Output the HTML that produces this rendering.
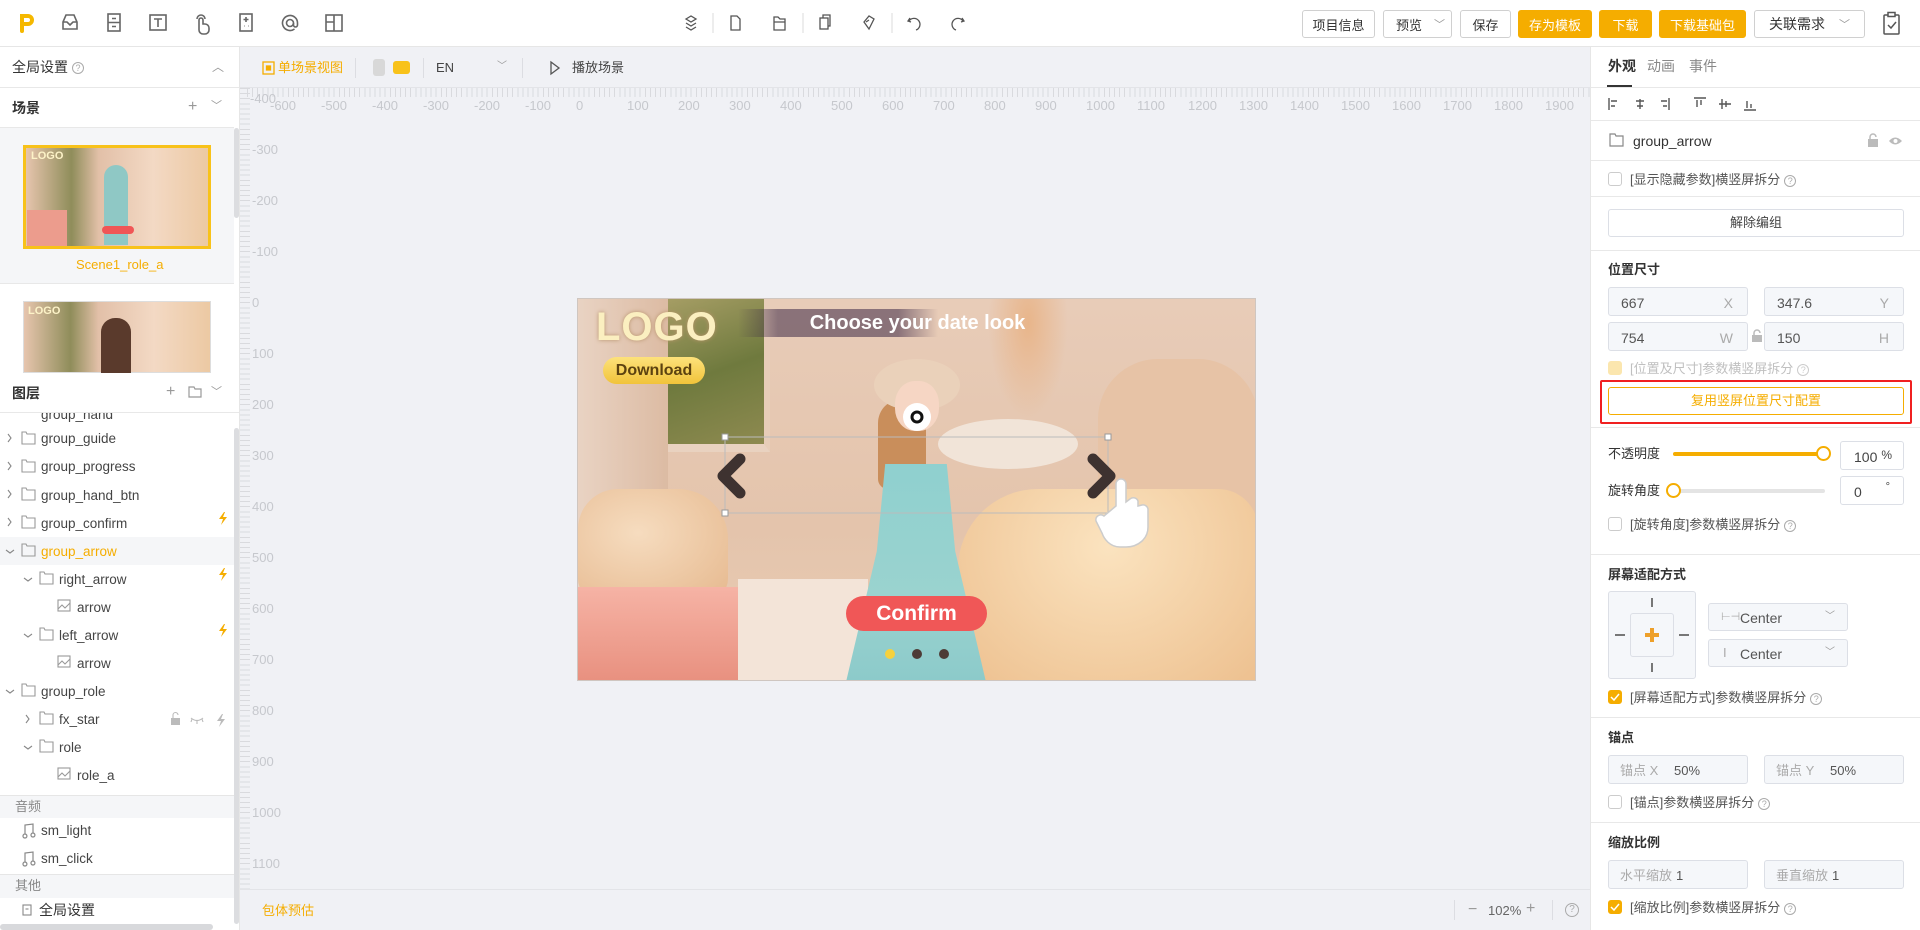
<!DOCTYPE html>
<html><head><meta charset="utf-8">
<style>
*{box-sizing:border-box;margin:0;padding:0}
body{width:1920px;height:930px;overflow:hidden;background:#fff;font-family:"Liberation Sans","Noto Sans CJK SC",sans-serif;color:#333;font-size:14px;position:relative}
.a{position:absolute}
.t{position:absolute;white-space:nowrap;line-height:1}
svg{position:absolute;overflow:visible}
.btn{position:absolute;top:10px;height:28px;border:1px solid #d0d0d0;border-radius:3px;font-size:13px;display:flex;align-items:center;justify-content:center;color:#333;background:#fff}
.ob{background:#f5ad00;border-color:#f5ad00;color:#fff}
.hl{position:absolute;height:1px;background:#e8e8e8}
.row{position:absolute;left:0;width:235px;height:28px}
.row .t{top:7px;font-size:13.5px;color:#444}
.inp{position:absolute;height:29px;border:1px solid #dcdfe6;border-radius:3px;background:#f5f7fa;font-size:14px;color:#555}
.cb{position:absolute;width:14px;height:14px;border:1px solid #ccc;border-radius:3px;background:#fff}
.cbo{background:#f5ad00;border-color:#f5ad00}
.lbl{font-size:13px;color:#555}
.rl{position:absolute;font-size:13px;color:#c6c8cd;white-space:nowrap;line-height:1}
.q{display:inline-block;width:12px;height:12px;border:1px solid #aaa;border-radius:50%;font-size:9px;line-height:10px;text-align:center;color:#aaa;vertical-align:middle;margin-left:4px}
.z{z-index:5}
</style></head><body>

<!-- TOP BAR -->
<div class="a" style="left:0;top:0;width:1920px;height:47px;border-bottom:1px solid #e6e6e6;background:#fff"></div>
<svg width="1920" height="47" style="left:0;top:0" fill="none" stroke="#666" stroke-width="1.6">
<path d="M22 31V16h6a4 4 0 010 8h-6" stroke="#f5b800" stroke-width="4" stroke-linecap="round"/>
<path d="M63 22l3-7h8l3 7v7H63z M63 22h4l3 3 3-3h4"/>
<rect x="108" y="14" width="12" height="17"/><path d="M108 22.5h12M112 18.5h4M112 26.5h4"/>
<rect x="150" y="15" width="16" height="15"/><path d="M154 19h8M158 19v8"/>
<path d="M199 28v-8a2 2 0 014 0v4h2a4 4 0 014 4v2a4 4 0 01-4 4h-2a4 4 0 01-4-4z M197 19a4 4 0 018 0"/>
<rect x="240" y="14" width="12" height="17"/><path d="M246 17v5M243.5 19.5h5M244 26h.5M248 26h.5"/>
<circle cx="290" cy="23" r="3.5"/><path d="M293.5 23v2a2 2 0 004 0v-2a7.5 7.5 0 10-3 6"/>
<rect x="326" y="15" width="16" height="16"/><path d="M334 15v16M326 22h8"/>
<g stroke-width="1.3" stroke="#555">
<path d="M686 19l5-3 5 3-5 3zM686 23l5 3 5-3M686 27l5 3 5-3"/>
<line x1="713" y1="13" x2="713" y2="33" stroke="#e3e3e3"/>
<path d="M731 16h6l3 3v11h-9z"/>
<path d="M774 17h4l2 2h5v11h-11z M774 22h11"/>
<line x1="803" y1="13" x2="803" y2="33" stroke="#e3e3e3"/>
<rect x="820" y="18" width="8" height="11"/><path d="M823 18v-3h7v11h-2"/>
<path d="M864 22l5-6 5 3-5 10z M866 22l3-2"/>
<line x1="892" y1="13" x2="892" y2="33" stroke="#e3e3e3"/>
<path d="M910 18l-2 3 3 1 M909 21a6 6 0 117 9"/>
<path d="M962 18l2 3-3 1 M963 21a6 6 0 10-7 9"/>
</g>
</svg>
<div class="btn" style="left:1302px;width:73px">项目信息</div>
<div class="btn" style="left:1383px;width:69px;justify-content:flex-start;padding-left:12px">预览 <span style="margin-left:12px;color:#999;font-size:11px">﹀</span></div>
<div class="btn" style="left:1460px;width:51px">保存</div>
<div class="btn ob" style="left:1518px;width:74px">存为模板</div>
<div class="btn ob" style="left:1599px;width:53px">下载</div>
<div class="btn ob" style="left:1659px;width:87px">下载基础包</div>
<div class="btn" style="left:1754px;width:111px;font-size:14px">关联需求 <span style="margin-left:14px;color:#999;font-size:11px">﹀</span></div>
<svg width="20" height="26" style="left:1882px;top:11px" fill="none" stroke="#555" stroke-width="1.5"><rect x="2" y="4" width="15" height="19" rx="1"/><rect x="6" y="1.5" width="7" height="4" fill="#fff"/><path d="M6 14l3 3 5-6"/></svg>

<!-- LEFT PANEL -->
<div class="a" style="left:239px;top:47px;width:1px;height:883px;background:#e6e6e6"></div>
<div class="t" style="left:12px;top:60px;font-size:14px;color:#333">全局设置<span class="q">?</span></div>
<div class="t" style="left:212px;top:61px;color:#999;font-size:12px">︿</div>
<div class="hl" style="left:0;top:87px;width:239px"></div>
<div class="t" style="left:12px;top:101px;font-size:14px;font-weight:bold;color:#333">场景</div>
<div class="t" style="left:188px;top:99px;color:#999;font-size:16px">+</div>
<div class="t" style="left:211px;top:101px;color:#999;font-size:11px">﹀</div>
<div class="hl" style="left:0;top:127px;width:234px"></div>
<div class="a" style="left:0;top:128px;width:234px;height:156px;background:#f5f6f8;border-bottom:1px solid #e8e8e8"></div>
<div class="a" style="left:234px;top:128px;width:5px;height:90px;background:#dcdde0;border-radius:3px"></div>
<div class="a" style="left:23px;top:145px;width:188px;height:104px;border:3px solid #f8c21a;background:linear-gradient(90deg,#e7c5ae 0%,#8f8d5a 25%,#e2c0a8 40%,#f3d9c4 70%,#ecc9a3 100%)"></div>
<div class="a" style="left:27px;top:210px;width:40px;height:36px;background:#ec9c8d"></div>
<div class="a" style="left:104px;top:165px;width:24px;height:80px;background:#8fc8c5;border-radius:12px 12px 0 0"></div>
<div class="a" style="left:102px;top:226px;width:32px;height:8px;background:#f05656;border-radius:4px"></div>
<div class="t" style="left:31px;top:151px;font-size:11px;font-weight:bold;color:#fdf3c8">LOGO</div>
<div class="t" style="left:76px;top:258px;font-size:13px;color:#f5ad00">Scene1_role_a</div>
<div class="a" style="left:23px;top:301px;width:188px;height:72px;border:1px solid #ddd;background:linear-gradient(90deg,#e7c5ae 0%,#8f8d5a 25%,#e2c0a8 40%,#f3d9c4 70%,#ecc9a3 100%)"></div>
<div class="a" style="left:101px;top:318px;width:30px;height:55px;background:#5a3a2c;border-radius:14px 14px 0 0"></div>
<div class="t" style="left:28px;top:306px;font-size:11px;font-weight:bold;color:#fdf3c8">LOGO</div>

<div class="row" style="top:413px;height:9px;overflow:hidden"><div class="t" style="left:41px;top:-5px">group_hand</div></div>
<div class="row" style="top:537px;background:#f5f6f8"></div>
<div class="t" style="left:41px;top:432px;font-size:13.5px;color:#444">group_guide</div>
<div class="t" style="left:41px;top:460px;font-size:13.5px;color:#444">group_progress</div>
<div class="t" style="left:41px;top:489px;font-size:13.5px;color:#444">group_hand_btn</div>
<div class="t" style="left:41px;top:517px;font-size:13.5px;color:#444">group_confirm</div>
<div class="t" style="left:41px;top:545px;font-size:13.5px;color:#f5ad00">group_arrow</div>
<div class="t" style="left:59px;top:573px;font-size:13.5px;color:#444">right_arrow</div>
<div class="t" style="left:77px;top:601px;font-size:13.5px;color:#444">arrow</div>
<div class="t" style="left:59px;top:629px;font-size:13.5px;color:#444">left_arrow</div>
<div class="t" style="left:77px;top:657px;font-size:13.5px;color:#444">arrow</div>
<div class="t" style="left:41px;top:685px;font-size:13.5px;color:#444">group_role</div>
<div class="t" style="left:59px;top:713px;font-size:13.5px;color:#444">fx_star</div>
<div class="t" style="left:59px;top:741px;font-size:13.5px;color:#444">role</div>
<div class="t" style="left:77px;top:769px;font-size:13.5px;color:#444">role_a</div>
<svg width="240" height="400" style="left:0;top:400px" fill="none" stroke="#888" stroke-width="1.1">
<path d="M8 6l3 3-3 3"/>
<path d="M8 34l3 4-3 4M8 62l3 4-3 4M8 90l3 4-3 4M8 118l3 4-3 4"/>
<path d="M6 150l4 3 4-3M24 178l4 3 4-3M24 234l4 3 4-3M6 290l4 3 4-3M24 346l4 3 4-3"/>
<path d="M26 315l3 4-3 4"/>
<g stroke="#999"><path d="M22 4h13v7H22z M22 32h4l1 2h8v10H22z M22 60h4l1 2h8v10H22z M22 88h4l1 2h8v10H22z M22 116h4l1 2h8v10H22z M22 144h4l1 2h8v10H22z M40 172h4l1 2h8v10H40z M40 228h4l1 2h8v10H40z M22 284h4l1 2h8v10H22z M40 312h4l1 2h8v10H40z M40 340h4l1 2h8v10H40z"/>
<rect x="58" y="200" width="12" height="11"/><path d="M58 209l4-4 3 3 5-5"/>
<rect x="58" y="256" width="12" height="11"/><path d="M58 265l4-4 3 3 5-5"/>
<rect x="58" y="368" width="12" height="11"/><path d="M58 377l4-4 3 3 5-5"/></g>
<g fill="#f5ad00" stroke="none"><path d="M224 112l-5 7h4l-2 6 6-8h-4l2-5z M224 168l-5 7h4l-2 6 6-8h-4l2-5z M224 224l-5 7h4l-2 6 6-8h-4l2-5z"/></g>
<path d="M222 314l-5 7h4l-2 6 6-8h-4l2-5z" fill="#bbb" stroke="none"/>
<rect x="171" y="318" width="9" height="7" fill="#bbb" stroke="none"/><path d="M173 318v-3a2.5 2.5 0 015 0" stroke="#bbb"/>
<path d="M191 318q6 5 12 0M192 319l-1 3M197 321v3M202 319l1 3" stroke="#bbb"/>
</svg>
<!-- layer header on top -->
<div class="a z" style="left:0;top:373px;width:239px;height:40px;background:#fff;border-bottom:1px solid #e8e8e8"></div>
<div class="t z" style="left:12px;top:386px;font-size:14px;font-weight:bold;color:#333">图层</div>
<div class="t z" style="left:166px;top:384px;color:#999;font-size:16px">+</div>
<svg class="z" width="14" height="12" style="left:188px;top:386px" fill="none" stroke="#999" stroke-width="1.2"><path d="M1 1h5l1 2h6v8H1z"/></svg>
<div class="t z" style="left:211px;top:387px;color:#999;font-size:11px">﹀</div>
<div class="a" style="left:234px;top:428px;width:5px;height:496px;background:#dcdde0;border-radius:3px"></div>

<div class="a" style="left:0;top:795px;width:234px;height:23px;background:#f5f6f8;border-top:1px solid #e6e6e6"></div>
<div class="t lbl" style="left:15px;top:800px;color:#888">音频</div>
<div class="t" style="left:41px;top:824px;font-size:13.5px;color:#444">sm_light</div>
<div class="t" style="left:41px;top:852px;font-size:13.5px;color:#444">sm_click</div>
<svg width="20" height="60" style="left:21px;top:822px" fill="none" stroke="#888" stroke-width="1.2"><path d="M4 12V3l8-1v9M4 12a2 2 0 11-.1 0M12 11a2 2 0 11-.1 0M4 40V31l8-1v9M4 40a2 2 0 11-.1 0M12 39a2 2 0 11-.1 0"/></svg>
<div class="a" style="left:0;top:874px;width:234px;height:24px;background:#f5f6f8;border-top:1px solid #e6e6e6"></div>
<div class="t lbl" style="left:15px;top:879px;color:#888">其他</div>
<svg width="12" height="12" style="left:22px;top:904px" fill="none" stroke="#888" stroke-width="1.1"><rect x="1" y="1" width="8" height="10"/><path d="M3.5 5h3"/></svg>
<div class="t" style="left:39px;top:903px;font-size:14px;color:#333">全局设置</div>
<div class="a" style="left:0;top:924px;width:213px;height:6px;background:#d8d9dc;border-radius:3px"></div>

<!-- CANVAS -->
<div class="a" style="left:240px;top:47px;width:1350px;height:883px;background:#f0f1f5"></div>
<svg width="14" height="14" style="left:262px;top:61px" fill="none" stroke="#f5ad00" stroke-width="1.3"><rect x="1" y="1" width="11" height="12"/><rect x="4.5" y="5" width="4" height="4" fill="#f5ad00"/></svg>
<div class="t" style="left:278px;top:61px;font-size:13px;color:#f5ad00">单场景视图</div>
<div class="a" style="left:355px;top:58px;width:1px;height:20px;background:#dcdde2"></div>
<div class="a" style="left:373px;top:59px;width:12px;height:17px;background:#d8d8d8;border-radius:3px"></div>
<div class="a" style="left:393px;top:61px;width:17px;height:13px;background:#f8c21a;border-radius:3px"></div>
<div class="a" style="left:423px;top:58px;width:1px;height:20px;background:#dcdde2"></div>
<div class="t" style="left:436px;top:61px;font-size:13px;color:#444">EN</div>
<div class="t" style="left:497px;top:62px;font-size:10px;color:#999">﹀</div>
<div class="a" style="left:522px;top:58px;width:1px;height:20px;background:#dcdde2"></div>
<svg width="12" height="14" style="left:549px;top:61px" fill="none" stroke="#555" stroke-width="1.3"><path d="M2 1l8 6-8 6z"/></svg>
<div class="t" style="left:572px;top:61px;font-size:13px;color:#444">播放场景</div>
<!-- rulers -->
<div class="a" style="left:240px;top:87px;width:1350px;height:1px;background:#e3e4e8"></div>
<div class="a" style="left:247px;top:88px;width:1343px;height:9px;background:repeating-linear-gradient(90deg,#d9dade 0 1px,transparent 1px 5.1px)"></div>
<div class="a" style="left:240px;top:88px;width:10px;height:802px;background:repeating-linear-gradient(180deg,#d9dade 0 1px,transparent 1px 5.1px)"></div>
<div class="rl" style="left:250px;top:92px">-400</div>
<div class="rl" style="left:270px;top:99px">-600</div><div class="rl" style="left:321px;top:99px">-500</div><div class="rl" style="left:372px;top:99px">-400</div><div class="rl" style="left:423px;top:99px">-300</div><div class="rl" style="left:474px;top:99px">-200</div><div class="rl" style="left:525px;top:99px">-100</div><div class="rl" style="left:576px;top:99px">0</div><div class="rl" style="left:627px;top:99px">100</div><div class="rl" style="left:678px;top:99px">200</div><div class="rl" style="left:729px;top:99px">300</div><div class="rl" style="left:780px;top:99px">400</div><div class="rl" style="left:831px;top:99px">500</div><div class="rl" style="left:882px;top:99px">600</div><div class="rl" style="left:933px;top:99px">700</div><div class="rl" style="left:984px;top:99px">800</div><div class="rl" style="left:1035px;top:99px">900</div><div class="rl" style="left:1086px;top:99px">1000</div><div class="rl" style="left:1137px;top:99px">1100</div><div class="rl" style="left:1188px;top:99px">1200</div><div class="rl" style="left:1239px;top:99px">1300</div><div class="rl" style="left:1290px;top:99px">1400</div><div class="rl" style="left:1341px;top:99px">1500</div><div class="rl" style="left:1392px;top:99px">1600</div><div class="rl" style="left:1443px;top:99px">1700</div><div class="rl" style="left:1494px;top:99px">1800</div><div class="rl" style="left:1545px;top:99px">1900</div>
<div class="rl" style="left:252px;top:143px">-300</div><div class="rl" style="left:252px;top:194px">-200</div><div class="rl" style="left:252px;top:245px">-100</div><div class="rl" style="left:252px;top:296px">0</div><div class="rl" style="left:252px;top:347px">100</div><div class="rl" style="left:252px;top:398px">200</div><div class="rl" style="left:252px;top:449px">300</div><div class="rl" style="left:252px;top:500px">400</div><div class="rl" style="left:252px;top:551px">500</div><div class="rl" style="left:252px;top:602px">600</div><div class="rl" style="left:252px;top:653px">700</div><div class="rl" style="left:252px;top:704px">800</div><div class="rl" style="left:252px;top:755px">900</div><div class="rl" style="left:252px;top:806px">1000</div><div class="rl" style="left:252px;top:857px">1100</div>

<!-- scene image -->
<div class="a" style="left:577px;top:298px;width:679px;height:383px;overflow:hidden;background:linear-gradient(180deg,#e8ccb8 0%,#e4c4ac 60%,#e9cdb4 100%);border:1px solid #cfc6c0">
 <div class="a" style="left:0;top:0;width:90px;height:383px;background:linear-gradient(90deg,#e9d3c3,#dcbba3)"></div>
 <div class="a" style="left:90px;top:0;width:102px;height:153px;background:linear-gradient(160deg,#a59d64,#6f7a3e 50%,#8e8a50);border-right:6px solid #e7cdb8;border-bottom:8px solid #e9d2c0"></div>
 <div class="a" style="left:360px;top:120px;width:140px;height:50px;background:#f1e4d8;border-radius:50%"></div>
 <div class="a" style="left:410px;top:0;width:80px;height:120px;background:radial-gradient(ellipse at 50% 20%,#e8b58a,transparent 70%)"></div>
 <div class="a" style="left:520px;top:60px;width:160px;height:170px;background:#e7c3a6;border-radius:60px 60px 0 0"></div>
 <div class="a" style="left:0;top:190px;width:150px;height:110px;background:radial-gradient(ellipse at 40% 40%,#f6dcbf,#e6b98f);border-radius:40px 50px 20px 20px"></div>
 <div class="a" style="left:0;top:288px;width:176px;height:95px;background:linear-gradient(180deg,#f6b3a5,#e8907f)"></div>
 <div class="a" style="left:160px;top:280px;width:130px;height:103px;background:#f3e4d8"></div>
 <div class="a" style="left:380px;top:190px;width:300px;height:193px;background:radial-gradient(ellipse at 50% 30%,#fbe3bf,#edc08f);border-radius:80px 40px 0 0"></div>
 <div class="a" style="left:300px;top:100px;width:48px;height:90px;background:#c98e5b;border-radius:24px 24px 10px 10px"></div>
 <div class="a" style="left:296px;top:60px;width:86px;height:52px;background:#ead1ba;border-radius:50%"></div>
 <div class="a" style="left:317px;top:82px;width:44px;height:50px;background:#f6d6c4;border-radius:45%"></div>
 <div class="a" style="left:268px;top:165px;width:140px;height:218px;background:linear-gradient(180deg,#8fd0cf,#9ad3cf 60%,#8ccaca);clip-path:polygon(28% 0,72% 0,78% 40%,100% 100%,0 100%,22% 40%)"></div>
 <div class="a" style="left:160px;top:10px;width:200px;height:28px;background:linear-gradient(90deg,transparent,rgba(60,40,70,.55) 20%,rgba(60,40,70,.55) 80%,transparent)"></div>
 <div class="t" style="left:0;width:679px;text-align:center;top:14px;font-size:20px;font-weight:bold;color:#fff">Choose your date look</div>
 <div class="t" style="left:18px;top:8px;font-size:40px;font-weight:bold;color:#fbefc0;letter-spacing:1px;text-shadow:0 0 4px #b7936a">LOGO</div>
 <div class="a" style="left:25px;top:58px;width:102px;height:27px;background:linear-gradient(#fde27b,#f1c33a);border-radius:14px;font-size:16px;font-weight:bold;color:#5c4210;text-align:center;line-height:27px">Download</div>
 <div class="a" style="left:268px;top:297px;width:141px;height:35px;background:#f05757;border-radius:18px;font-size:21px;font-weight:bold;color:#fff;text-align:center;line-height:35px">Confirm</div>
 <div class="a" style="left:307px;top:350px;width:10px;height:10px;background:#f6d13d;border-radius:50%"></div>
 <div class="a" style="left:334px;top:350px;width:10px;height:10px;background:#4d3b36;border-radius:50%"></div>
 <div class="a" style="left:361px;top:350px;width:10px;height:10px;background:#4d3b36;border-radius:50%"></div>
 <svg width="679" height="383" style="left:0;top:0" fill="none">
  <rect x="147" y="138" width="383" height="76" stroke="#bbb" stroke-width="1"/>
  <rect x="144" y="135" width="6" height="6" fill="#fff" stroke="#999"/><rect x="527" y="135" width="6" height="6" fill="#fff" stroke="#999"/><rect x="144" y="211" width="6" height="6" fill="#fff" stroke="#999"/>
  <path d="M162 160l-17 17 17 17" stroke="#3e3230" stroke-width="11" stroke-linecap="round" stroke-linejoin="round"/>
  <path d="M515 160l17 17-17 17" stroke="#3e3230" stroke-width="11" stroke-linecap="round" stroke-linejoin="round"/>
  <path d="M538 207v-22a5 5 0 0110 0v18l4-3a5 5 0 018 2v5l4-1a5 5 0 016 4v18c0 12-10 20-22 20h-6c-10 0-16-8-18-14l-6-12a5 5 0 018-5z" fill="#fff" stroke="#ccc" stroke-width="1.5"/>
  <circle cx="339" cy="118" r="14" fill="#fff"/><circle cx="339" cy="118" r="5" stroke="#111" stroke-width="3"/>
 </svg>
</div>

<!-- bottom bar -->
<div class="a" style="left:240px;top:889px;width:1350px;height:1px;background:#e3e4e8"></div>
<div class="t" style="left:262px;top:904px;font-size:13px;color:#f5ad00">包体预估</div>
<div class="a" style="left:1454px;top:900px;width:1px;height:20px;background:#dcdde2"></div>
<div class="t" style="left:1468px;top:902px;font-size:16px;color:#999">−</div>
<div class="t" style="left:1488px;top:904px;font-size:13px;color:#666">102%</div>
<div class="t" style="left:1526px;top:901px;font-size:16px;color:#999">+</div>
<div class="a" style="left:1552px;top:900px;width:1px;height:20px;background:#dcdde2"></div>
<div class="a" style="left:1565px;top:903px;width:14px;height:14px;border:1.5px solid #aaa;border-radius:50%;font-size:10px;color:#aaa;text-align:center;line-height:11px">?</div>

<!-- RIGHT PANEL -->
<div class="a" style="left:1590px;top:47px;width:330px;height:883px;background:#fff;border-left:1px solid #e6e6e6"></div>
<div class="t" style="left:1608px;top:59px;font-size:14px;font-weight:bold;color:#333">外观</div>
<div class="t" style="left:1647px;top:59px;font-size:14px;color:#888">动画</div>
<div class="t" style="left:1689px;top:59px;font-size:14px;color:#888">事件</div>
<div class="a" style="left:1607px;top:85px;width:25px;height:2px;background:#333"></div>
<div class="hl" style="left:1591px;top:87px;width:329px"></div>
<svg width="160" height="16" style="left:1608px;top:96px" fill="none" stroke="#555" stroke-width="1.4">
<path d="M1 2v12M3 5h6M3 10h4"/><path d="M32 3v10M28 5h8M29 10h6"/><path d="M61 2v12M53 5h6M55 10h4"/>
<path d="M86 2h12M89 4v7M93 4v5"/><path d="M111 8h12M114 3v10M118 5v6"/><path d="M136 14h12M139 5v7M143 8v4"/>
</svg>
<div class="hl" style="left:1591px;top:120px;width:329px"></div>
<svg width="16" height="14" style="left:1609px;top:133px" fill="none" stroke="#888" stroke-width="1.2"><path d="M1 1h5l1 2h7v10H1z"/></svg>
<div class="t" style="left:1633px;top:134px;font-size:14px;color:#333">group_arrow</div>
<svg width="40" height="14" style="left:1868px;top:134px"><rect x="0" y="5" width="10" height="8" fill="#bbb"/><path d="M2 5V3a3 3 0 016 0" fill="none" stroke="#bbb" stroke-width="1.5"/><path d="M21 7q6-7 13 0q-7 7-13 0z" fill="#bbb"/><circle cx="27.5" cy="7" r="2" fill="#fff"/></svg>
<div class="hl" style="left:1591px;top:160px;width:329px"></div>
<div class="cb" style="left:1608px;top:172px"></div>
<div class="t lbl" style="left:1630px;top:173px">[显示隐藏参数]横竖屏拆分<span class="q">?</span></div>
<div class="hl" style="left:1591px;top:196px;width:329px"></div>
<div class="a" style="left:1608px;top:209px;width:296px;height:28px;border:1px solid #dcdfe6;border-radius:3px;font-size:13px;color:#444;text-align:center;line-height:26px">解除编组</div>
<div class="hl" style="left:1591px;top:250px;width:329px"></div>
<div class="t" style="left:1608px;top:263px;font-size:13px;font-weight:bold;color:#333">位置尺寸</div>
<div class="inp" style="left:1608px;top:287px;width:140px"><span class="t" style="left:12px;top:8px">667</span><span class="t" style="right:14px;top:8px;color:#aaa">X</span></div>
<div class="inp" style="left:1764px;top:287px;width:140px"><span class="t" style="left:12px;top:8px">347.6</span><span class="t" style="right:14px;top:8px;color:#aaa">Y</span></div>
<div class="inp" style="left:1608px;top:322px;width:140px"><span class="t" style="left:12px;top:8px">754</span><span class="t" style="right:14px;top:8px;color:#aaa">W</span></div>
<svg width="12" height="12" style="left:1751px;top:330px"><rect x="1" y="5" width="10" height="7" fill="#bbb"/><path d="M3 5V3a3 3 0 016 0" fill="none" stroke="#bbb" stroke-width="1.5"/></svg>
<div class="inp" style="left:1764px;top:322px;width:140px"><span class="t" style="left:12px;top:8px">150</span><span class="t" style="right:14px;top:8px;color:#aaa">H</span></div>
<div class="cb" style="left:1608px;top:361px;background:#fbe6ae;border-color:#fbe6ae"></div>
<div class="t lbl" style="left:1630px;top:362px;color:#c0c0c0">[位置及尺寸]参数横竖屏拆分<span class="q" style="border-color:#ccc;color:#ccc">?</span></div>
<div class="a" style="left:1600px;top:380px;width:312px;height:44px;border:2px solid #f02020;border-radius:2px"></div>
<div class="a" style="left:1608px;top:387px;width:296px;height:28px;border:1px solid #f5ad00;border-radius:3px;font-size:13px;color:#f5ad00;text-align:center;line-height:26px">复用竖屏位置尺寸配置</div>
<div class="hl" style="left:1591px;top:427px;width:329px"></div>
<div class="t lbl" style="left:1608px;top:447px;color:#333">不透明度</div>
<div class="a" style="left:1673px;top:452px;width:152px;height:4px;background:#f5ad00;border-radius:2px"></div>
<div class="a" style="left:1816px;top:446px;width:15px;height:15px;background:#fff;border:2px solid #f5ad00;border-radius:50%"></div>
<div class="inp" style="left:1840px;top:441px;width:64px;background:#fff"><span class="t" style="left:13px;top:8px;color:#444">100</span><span class="t" style="right:11px;top:7px;color:#444;font-size:12px">%</span></div>
<div class="t lbl" style="left:1608px;top:484px;color:#333">旋转角度</div>
<div class="a" style="left:1673px;top:489px;width:152px;height:4px;background:#e4e4e4;border-radius:2px"></div>
<div class="a" style="left:1666px;top:483px;width:15px;height:15px;background:#fff;border:2px solid #f5ad00;border-radius:50%"></div>
<div class="inp" style="left:1840px;top:476px;width:64px;background:#fff"><span class="t" style="left:13px;top:8px;color:#444">0</span><span class="t" style="right:13px;top:5px;color:#444;font-size:11px">°</span></div>
<div class="cb" style="left:1608px;top:517px"></div>
<div class="t lbl" style="left:1630px;top:518px">[旋转角度]参数横竖屏拆分<span class="q">?</span></div>
<div class="hl" style="left:1591px;top:554px;width:329px"></div>
<div class="t" style="left:1608px;top:568px;font-size:13px;font-weight:bold;color:#333">屏幕适配方式</div>
<div class="a" style="left:1608px;top:591px;width:88px;height:88px;border:1px solid #dcdfe6;border-radius:3px;background:#f5f7fa"></div>
<div class="a" style="left:1630px;top:613px;width:44px;height:44px;border:1px solid #dcdfe6;border-radius:3px"></div>
<div class="a" style="left:1651px;top:598px;width:2px;height:9px;background:#777"></div>
<div class="a" style="left:1651px;top:663px;width:2px;height:9px;background:#777"></div>
<div class="a" style="left:1615px;top:634px;width:10px;height:2px;background:#777"></div>
<div class="a" style="left:1679px;top:634px;width:10px;height:2px;background:#777"></div>
<div class="a" style="left:1645px;top:633px;width:14px;height:4px;background:#eea02a"></div>
<div class="a" style="left:1650px;top:628px;width:4px;height:14px;background:#eea02a"></div>
<div class="inp" style="left:1708px;top:603px;width:140px;height:28px"><span class="t" style="left:12px;top:8px;color:#aaa;font-size:11px">⊢⊣</span><span class="t" style="left:31px;top:7px;color:#555">Center</span><span class="t" style="right:12px;top:8px;color:#999;font-size:10px">﹀</span></div>
<div class="inp" style="left:1708px;top:639px;width:140px;height:28px"><span class="t" style="left:14px;top:6px;color:#aaa;font-size:13px">I</span><span class="t" style="left:31px;top:7px;color:#555">Center</span><span class="t" style="right:12px;top:8px;color:#999;font-size:10px">﹀</span></div>
<div class="cb cbo" style="left:1608px;top:690px"><svg width="12" height="12" style="left:0;top:0"><path d="M2 6l3 3 5-6" fill="none" stroke="#fff" stroke-width="1.5"/></svg></div>
<div class="t lbl" style="left:1630px;top:691px">[屏幕适配方式]参数横竖屏拆分<span class="q">?</span></div>
<div class="hl" style="left:1591px;top:717px;width:329px"></div>
<div class="t" style="left:1608px;top:731px;font-size:13px;font-weight:bold;color:#333">锚点</div>
<div class="inp" style="left:1608px;top:755px;width:140px"><span class="t" style="left:11px;top:8px;color:#aaa;font-size:13px">锚点 X</span><span class="t" style="left:65px;top:8px;color:#555;font-size:13px">50%</span></div>
<div class="inp" style="left:1764px;top:755px;width:140px"><span class="t" style="left:11px;top:8px;color:#aaa;font-size:13px">锚点 Y</span><span class="t" style="left:65px;top:8px;color:#555;font-size:13px">50%</span></div>
<div class="cb" style="left:1608px;top:795px"></div>
<div class="t lbl" style="left:1630px;top:796px">[锚点]参数横竖屏拆分<span class="q">?</span></div>
<div class="hl" style="left:1591px;top:822px;width:329px"></div>
<div class="t" style="left:1608px;top:836px;font-size:13px;font-weight:bold;color:#333">缩放比例</div>
<div class="inp" style="left:1608px;top:860px;width:140px"><span class="t" style="left:11px;top:8px;color:#aaa;font-size:13px">水平缩放</span><span class="t" style="left:67px;top:8px;color:#555;font-size:13px">1</span></div>
<div class="inp" style="left:1764px;top:860px;width:140px"><span class="t" style="left:11px;top:8px;color:#aaa;font-size:13px">垂直缩放</span><span class="t" style="left:67px;top:8px;color:#555;font-size:13px">1</span></div>
<div class="cb cbo" style="left:1608px;top:900px"><svg width="12" height="12" style="left:0;top:0"><path d="M2 6l3 3 5-6" fill="none" stroke="#fff" stroke-width="1.5"/></svg></div>
<div class="t lbl" style="left:1630px;top:901px">[缩放比例]参数横竖屏拆分<span class="q">?</span></div>
</body></html>
